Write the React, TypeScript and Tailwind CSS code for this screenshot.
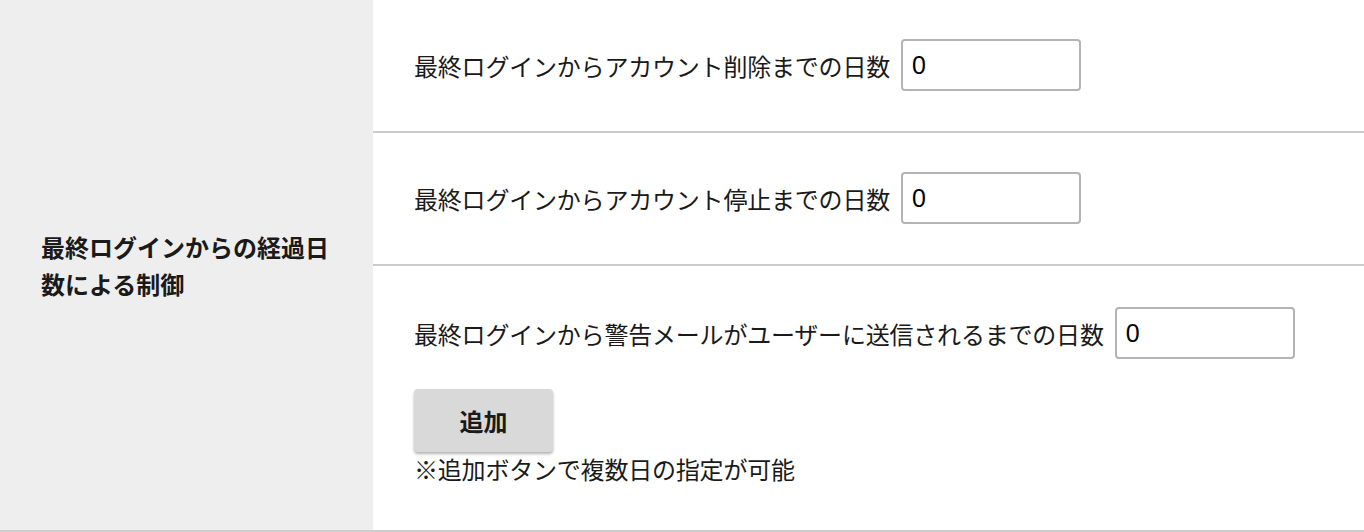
import { useState } from "react";

const FONT = { fontFamily: '"Noto Sans CJK JP", "Noto Sans", sans-serif' };

interface DaysFieldProps {
  label: string;
  value: string;
  onChange: (v: string) => void;
}

function DaysField({ label, value, onChange }: DaysFieldProps) {
  return (
    <div className="flex items-center gap-[11px]">
      <span className="whitespace-nowrap text-[24px] leading-[33px] tracking-[-0.2px] text-[#1a1a1a]">
        {label}
      </span>
      <input
        type="text"
        value={value}
        onChange={(e) => onChange(e.target.value)}
        className="h-[52px] w-[180px] rounded-[4px] border-2 border-[#b4b4b4] bg-white px-[9px] text-[25px] text-black outline-none"
        style={{ fontFamily: '"Liberation Sans", Arial, sans-serif' }}
      />
    </div>
  );
}

export default function App() {
  const [deleteDays, setDeleteDays] = useState("0");
  const [suspendDays, setSuspendDays] = useState("0");
  const [warnDays, setWarnDays] = useState<string[]>(["0"]);

  return (
    <div className="flex w-full border-b-2 border-[#cccccc] bg-white" style={FONT}>
      {/* ── Left heading cell ── */}
      <div className="flex w-[373px] shrink-0 items-center bg-[#eeeeee] px-[41px]">
        <p className="text-[24px] font-bold leading-[37px] text-[#1a1a1a]">
          最終ログインからの経過日数による制御
        </p>
      </div>

      {/* ── Right settings cell ── */}
      <div className="min-w-0 flex-1">
        <div className="border-b-2 border-[#cccccc] pb-[40px] pl-[41px] pt-[39px]">
          <DaysField
            label="最終ログインからアカウント削除までの日数"
            value={deleteDays}
            onChange={setDeleteDays}
          />
        </div>
        <div className="border-b-2 border-[#cccccc] pb-[40px] pl-[41px] pt-[39px]">
          <DaysField
            label="最終ログインからアカウント停止までの日数"
            value={suspendDays}
            onChange={setSuspendDays}
          />
        </div>
        <div className="pb-[45px] pl-[41px] pt-[41px]">
          <div className="flex flex-col gap-3">
            {warnDays.map((d, i) => (
              <DaysField
                key={i}
                label="最終ログインから警告メールがユーザーに送信されるまでの日数"
                value={d}
                onChange={(v) =>
                  setWarnDays((prev) => prev.map((p, j) => (j === i ? v : p)))
                }
              />
            ))}
          </div>
          <button
            type="button"
            onClick={() => setWarnDays((prev) => [...prev, "0"])}
            className="mt-[30px] h-[63px] w-[139px] rounded-[4px] bg-[#d9d9d9] text-[24px] font-bold text-[#1a1a1a] shadow-[0_2px_3px_rgba(0,0,0,0.3)]"
          >
            追加
          </button>
          <p className="text-[24px] leading-[33px] tracking-[-0.2px] text-[#1a1a1a]">
            ※追加ボタンで複数日の指定が可能
          </p>
        </div>
      </div>
    </div>
  );
}
